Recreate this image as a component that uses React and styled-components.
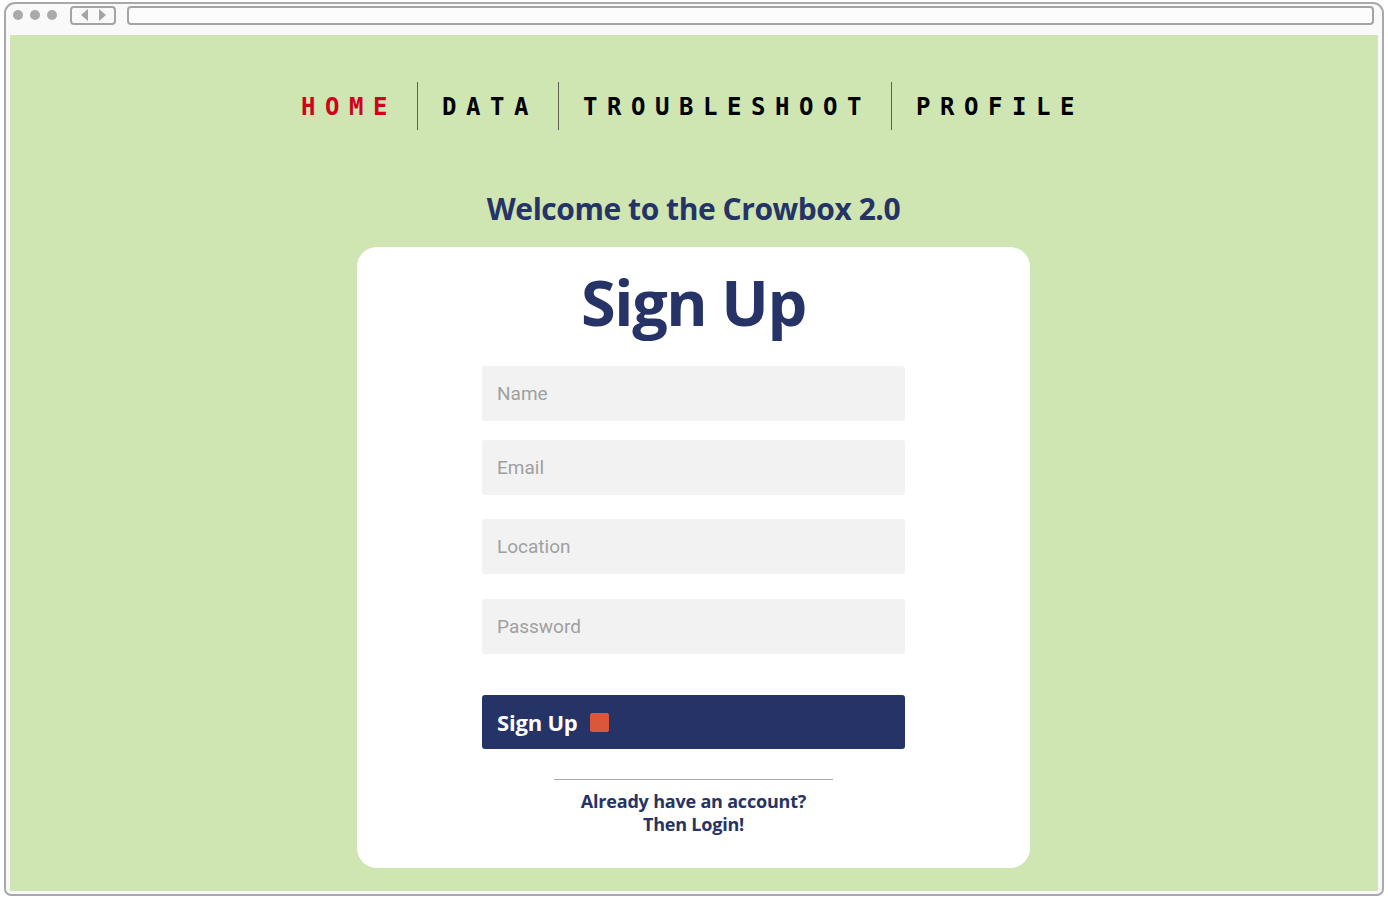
import React from 'react'
import styled, { createGlobalStyle } from 'styled-components'

const navy = '#253367'

const GlobalStyle = createGlobalStyle`
  html, body {
    margin: 0;
    padding: 0;
    background: #ffffff;
  }
  * {
    box-sizing: border-box;
  }
`

const Page = styled.div`
  width: 1388px;
  height: 899px;
  padding: 2px 4px 3px 4px;
`

const BrowserWindow = styled.div`
  height: 100%;
  border: 2px solid #a9a9a9;
  border-radius: 11px 11px 7px 7px;
  background: #f9f9f9;
  display: flex;
  flex-direction: column;
`

const ChromeBar = styled.div`
  height: 22px;
  flex: none;
  display: flex;
  align-items: center;
  padding: 0 8px 0 7px;
`

const Dot = styled.span`
  width: 10px;
  height: 10px;
  border-radius: 50%;
  background: #aaaaaa;
  margin-right: 7px;
`

const NavArrows = styled.div`
  width: 46px;
  height: 19px;
  margin-left: 6px;
  border: 2px solid #a4a4a4;
  border-radius: 4px;
  display: flex;
  align-items: center;
  justify-content: center;
  gap: 11px;
`

const Arrow = styled.span`
  width: 0;
  height: 0;
  border-top: 6px solid transparent;
  border-bottom: 6px solid transparent;
  ${(p) => (p.$left ? 'border-right: 7px solid #a4a4a4;' : 'border-left: 7px solid #a4a4a4;')}
`

const AddressBar = styled.div`
  flex: 1;
  height: 19px;
  margin-left: 11px;
  border: 2px solid #a4a4a4;
  border-radius: 4px;
  background: #fcfcfc;
`

const Content = styled.main`
  flex: 1;
  margin: 9px 4px 3px 4px;
  background: #cfe6b3;
  padding: 47px 1px 0 0;
  display: flex;
  flex-direction: column;
  align-items: center;
`

const Nav = styled.nav`
  display: flex;
  height: 48px;
  margin-right: 6px;
`

const NavItem = styled.a`
  display: flex;
  align-items: center;
  padding: 2px 20px 0 24px;
  font-family: 'DejaVu Sans Mono', 'Liberation Mono', monospace;
  font-weight: bold;
  font-size: 24px;
  letter-spacing: 9.55px;
  color: ${(p) => (p.$active ? '#d0021b' : '#000000')};
  text-decoration: none;
  & + & {
    border-left: 1px solid #5a6150;
  }
`

const Welcome = styled.h2`
  margin: 61px 0 0;
  font-family: 'Open Sans', 'Noto Sans', sans-serif;
  font-weight: 700;
  font-size: 30px;
  line-height: 36px;
  color: ${navy};
  letter-spacing: -0.45px;
`

const Card = styled.section`
  width: 673px;
  height: 621px;
  margin-top: 20px;
  background: #ffffff;
  border-radius: 20px;
  display: flex;
  flex-direction: column;
  align-items: center;
  padding-top: 15px;
`

const Title = styled.h1`
  margin: 0;
  font-family: 'Open Sans', 'Noto Sans', sans-serif;
  font-weight: 700;
  font-size: 63px;
  line-height: 80px;
  letter-spacing: -1.4px;
  color: ${navy};
`

const Form = styled.form`
  width: 423px;
  margin-top: 24px;
  display: flex;
  flex-direction: column;
`

const Field = styled.input`
  width: 100%;
  height: 55px;
  margin-top: ${(p) => p.$gap || 0}px;
  border: none;
  border-radius: 3px;
  background: #f2f2f2;
  padding: 0 15px;
  font-family: Roboto, 'Liberation Sans', sans-serif;
  font-size: 19px;
  color: #333;
  outline: none;
  &::placeholder {
    color: #a0a0a0;
  }
`

const SubmitButton = styled.button`
  width: 100%;
  height: 54px;
  margin-top: 41px;
  border: none;
  border-radius: 3px;
  background: ${navy};
  display: flex;
  align-items: center;
  gap: 12px;
  padding: 0 15px;
  font-family: 'Open Sans', 'Noto Sans', sans-serif;
  font-weight: 700;
  font-size: 22px;
  letter-spacing: -0.2px;
  color: #ffffff;
  cursor: pointer;
`

const StatusSquare = styled.span`
  width: 19px;
  height: 19px;
  border-radius: 2px;
  background: #d9573a;
`

const Divider = styled.hr`
  width: 279px;
  margin: 30px 0 0;
  border: none;
  border-top: 1px solid #a8a8a8;
`

const LoginLink = styled.a`
  margin-top: 10px;
  text-align: center;
  font-family: 'Open Sans', 'Noto Sans', sans-serif;
  font-weight: 700;
  font-size: 18px;
  line-height: 23px;
  letter-spacing: -0.2px;
  color: ${navy};
  text-decoration: none;
`

const links = ['HOME', 'DATA', 'TROUBLESHOOT', 'PROFILE']

const fields = [
  { placeholder: 'Name', gap: 0 },
  { placeholder: 'Email', gap: 19 },
  { placeholder: 'Location', gap: 24 },
  { placeholder: 'Password', gap: 25, type: 'password' },
]

export default function App() {
  return (
    <Page>
      <GlobalStyle />
      <BrowserWindow>
        <ChromeBar>
          <Dot />
          <Dot />
          <Dot />
          <NavArrows>
            <Arrow $left />
            <Arrow />
          </NavArrows>
          <AddressBar />
        </ChromeBar>
        <Content>
          <Nav>
            {links.map((l, i) => (
              <NavItem key={l} href="#" $active={i === 0}>
                {l}
              </NavItem>
            ))}
          </Nav>
          <Welcome>Welcome to the Crowbox 2.0</Welcome>
          <Card>
            <Title>Sign Up</Title>
            <Form onSubmit={(e) => e.preventDefault()}>
              {fields.map((f) => (
                <Field
                  key={f.placeholder}
                  placeholder={f.placeholder}
                  type={f.type || 'text'}
                  $gap={f.gap}
                />
              ))}
              <SubmitButton type="submit">
                Sign Up <StatusSquare />
              </SubmitButton>
            </Form>
            <Divider />
            <LoginLink href="#">
              Already have an account?
              <br />
              Then Login!
            </LoginLink>
          </Card>
        </Content>
      </BrowserWindow>
    </Page>
  )
}
